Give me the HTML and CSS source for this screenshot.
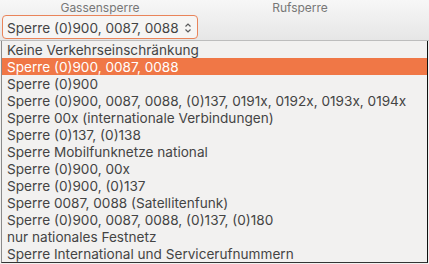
FILE: index.html
```html
<!DOCTYPE HTML>
<html>
<head>
<meta http-equiv="Content-Type" content="text/html; charset=utf-8">
<title>Sperren</title>
<link rel="stylesheet" href="styles.css">
</head>
<body>
	<div class="bar">
		<div class="col">
			<div class="label">Gassensperre</div>
			<div class="combo">
				<span class="combo-text">Sperre (0)900, 0087, 0088</span>
				<svg class="spin" width="8" height="12" viewBox="0 0 8 12">
					<path d="M1.5 4.5 L4 2 L6.5 4.5" fill="none" stroke="#5a5a5a" stroke-width="1.2"/>
					<path d="M1.5 7.5 L4 10 L6.5 7.5" fill="none" stroke="#5a5a5a" stroke-width="1.2"/>
				</svg>
			</div>
		</div>
		<div class="col">
			<div class="label">Rufsperre</div>
		</div>
	</div>

	<ul class="menu">
		<li>Keine Verkehrseinschränkung</li>
		<li class="current">Sperre (0)900, 0087, 0088</li>
		<li>Sperre (0)900</li>
		<li>Sperre (0)900, 0087, 0088, (0)137, 0191x, 0192x, 0193x, 0194x</li>
		<li>Sperre 00x (internationale Verbindungen)</li>
		<li>Sperre (0)137, (0)138</li>
		<li>Sperre Mobilfunknetze national</li>
		<li>Sperre (0)900, 00x</li>
		<li>Sperre (0)900, (0)137</li>
		<li>Sperre 0087, 0088 (Satellitenfunk)</li>
		<li>Sperre (0)900, 0087, 0088, (0)137, (0)180</li>
		<li>nur nationales Festnetz</li>
		<li>Sperre International und Servicerufnummern</li>
	</ul>
</body>
</html>
```

FILE: styles.css
```css
html, body { margin: 0; padding: 0; }
body { width: 429px; height: 264px; background: #f2f1f0; font-family: Inter, "Open Sans", sans-serif; position: relative; overflow: hidden; }

.bar { height: 41px; border-bottom: 1px solid #bdbdbd; background: linear-gradient(#f7f7f7, #e6e6e6); display: flex; gap: 4px; padding: 0 0 0 2px; box-sizing: border-box; }
.col { width: 196px; display: flex; flex-direction: column; }
.label { font-size: 12px; line-height: 15px; color: #777; text-align: center; }
.combo { height: 24px; box-sizing: border-box; border: 1px solid #e9845a; border-radius: 4px; background: #f6f5f4; display: flex; align-items: center; padding: 1px 5px 0 4px; }
.combo-text { flex: 1; font-size: 13.6px; line-height: 18px; color: #444; white-space: nowrap; }
.spin { display: block; }

.menu { position: absolute; left: 1px; top: 41px; width: 427px; height: 222px; margin: 0; padding: 0; list-style: none; box-sizing: border-box; border-left: 1px solid #8a8a8a; border-right: 1px solid #111; border-bottom: 1px solid #333; background: #f2f1f0; }
.menu li { height: 17px; line-height: 16px; padding: 1px 0 0 5px; box-sizing: border-box; font-size: 13.6px; color: #444; white-space: nowrap; }
.menu li.current { background: #f07746; color: #fff; }
```
